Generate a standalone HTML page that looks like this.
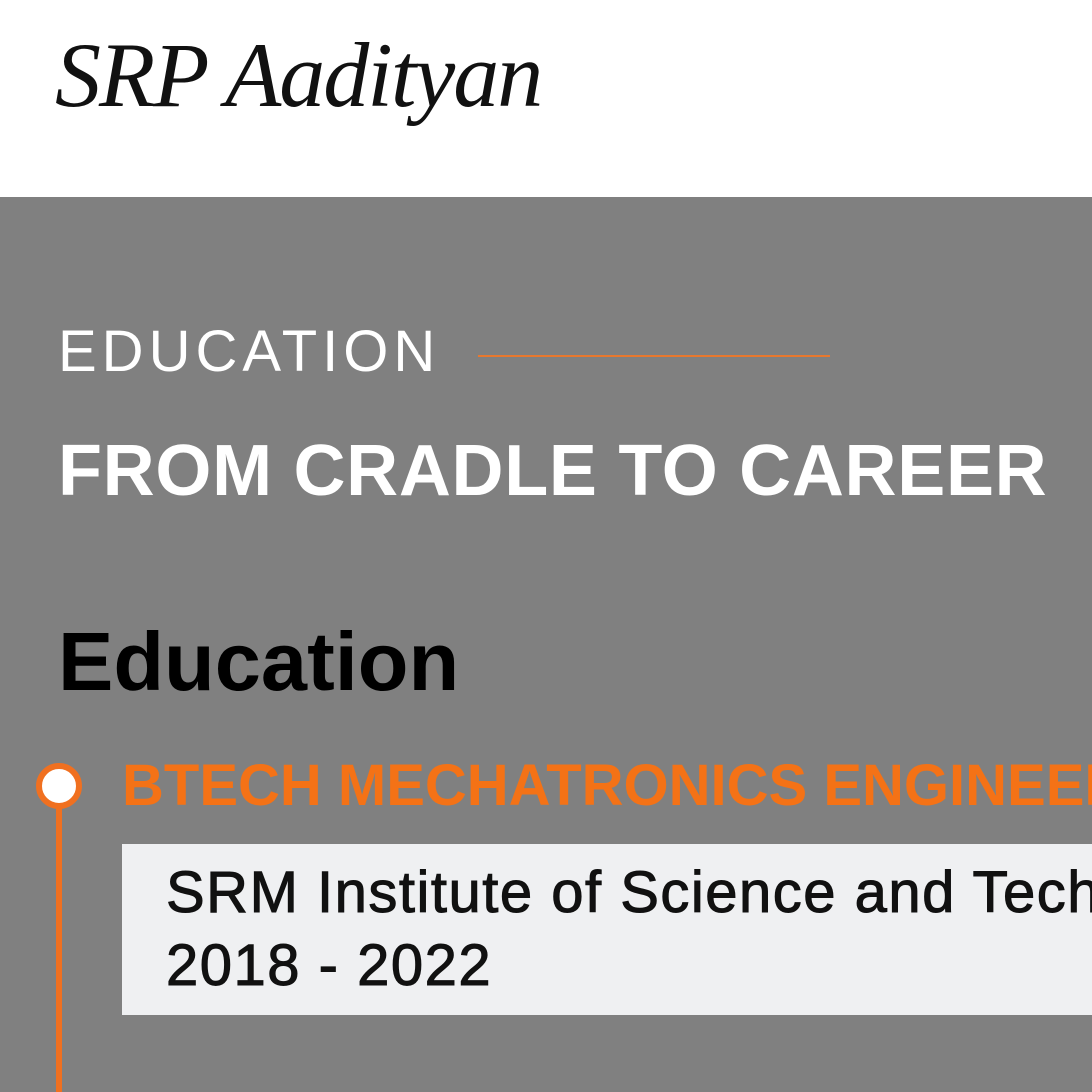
<!DOCTYPE html>
<html style="overflow:hidden;width:1092px;height:1092px"><head><style>
body{margin:0;width:1092px;height:1092px;overflow:hidden;background:#808080;font-family:"Liberation Sans",sans-serif;position:relative}
.hdr{position:absolute;left:0;top:0;width:1092px;height:197px;background:#fff}
.logo{position:absolute;left:55px;top:22px;font-family:"Liberation Serif",serif;font-style:italic;font-size:92px;color:#111;letter-spacing:-2px;font-weight:normal}
.t{position:absolute;white-space:nowrap}
.clip{position:absolute;overflow:hidden}
</style></head><body>
<div class="hdr"><div class="logo">SRP Aadityan</div></div>
<div class="t" style="left:58px;top:318px;font-size:58px;color:#fff;letter-spacing:5px">EDUCATION</div>
<div style="position:absolute;left:478px;top:355px;width:352px;height:2px;background:#e8782e"></div>
<div class="t" style="left:58px;top:430px;font-size:72px;font-weight:bold;color:#fff;letter-spacing:0.7px">FROM CRADLE TO CAREER</div>
<div class="t" style="left:58px;top:614px;font-size:83px;font-weight:bold;color:#000">Education</div>
<div style="position:absolute;left:56px;top:790px;width:6px;height:302px;background:#f07020"></div>
<div style="position:absolute;left:36px;top:763px;width:34px;height:34px;border-radius:50%;background:#fff;border:6px solid #f07020"></div>
<div class="clip" style="left:122px;top:745px;width:970px;height:80px">
<div class="t" style="left:0;top:7px;font-size:58px;font-weight:bold;color:#f47216">BTECH MECHATRONICS ENGINEERING</div>
</div>
<div class="clip" style="left:122px;top:844px;width:970px;height:171px;background:#eff0f2">
<div class="t" style="left:44px;top:12px;font-size:58px;color:#111;line-height:73px;letter-spacing:1.5px;-webkit-text-stroke:1px #111">SRM Institute of Science and Technology<br>2018 - 2022</div>
</div>
</body></html>
